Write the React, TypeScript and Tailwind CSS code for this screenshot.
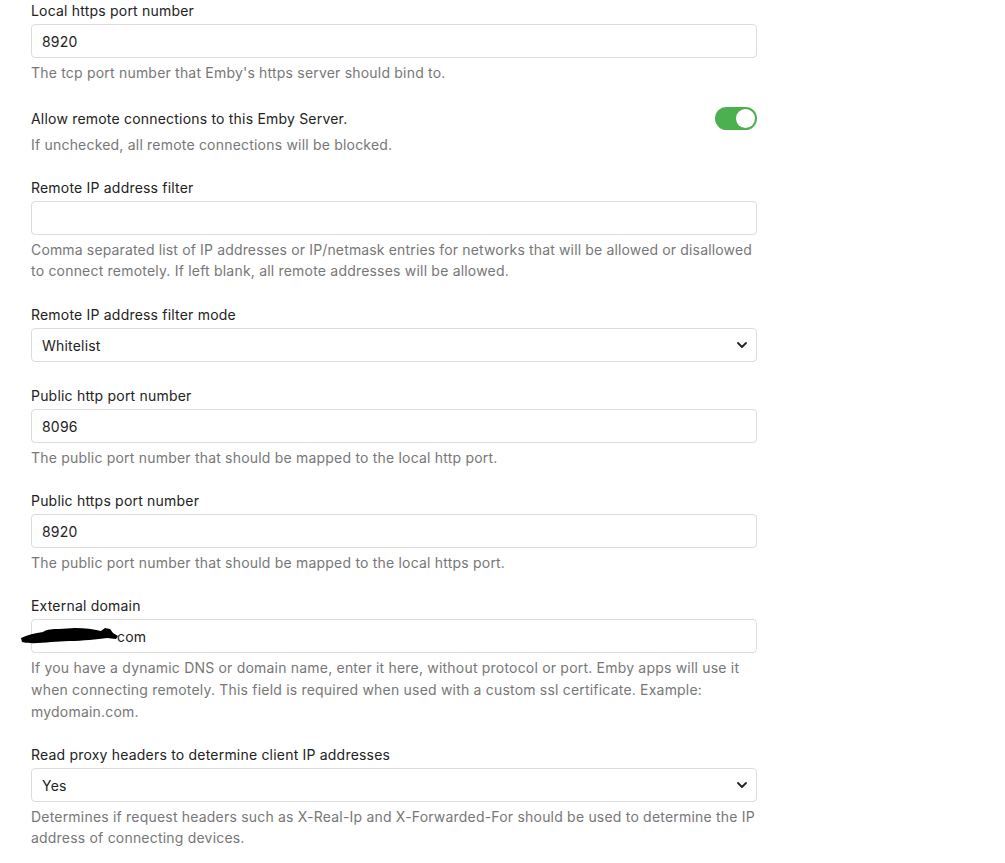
import { ChevronDown } from "lucide-react";

const font = { fontFamily: "Inter, 'Noto Sans', sans-serif" };

function Label({ children }: { children: React.ReactNode }) {
  return <div className="text-[14px] leading-5 tracking-[0.2px] text-[#222] mb-[3px]">{children}</div>;
}

function Help({ children, tall }: { children: React.ReactNode; tall?: boolean }) {
  return (
    <div
      className={
        "mt-[4px] text-[14px] tracking-[0.2px] text-[#777] whitespace-nowrap " +
        (tall ? "leading-[22px]" : "leading-[21px]")
      }
    >
      {children}
    </div>
  );
}

function TextBox({ value }: { value: string }) {
  return (
    <div className="h-[34px] w-full rounded-[4px] border border-[#dcdcdc] bg-white pl-[10px] flex items-center text-[14px] tracking-[0.2px] text-[#222]">
      {value}
    </div>
  );
}

function SelectBox({ value }: { value: string }) {
  return (
    <div className="h-[34px] w-full rounded-[4px] border border-[#dcdcdc] bg-white pl-[10px] pr-[6px] flex items-center justify-between text-[14px] tracking-[0.2px] text-[#222]">
      <span>{value}</span>
      <ChevronDown size={16} strokeWidth={2.75} className="text-[#222]" />
    </div>
  );
}

export default function App() {
  return (
    <div className="min-h-screen bg-white" style={font}>
      <div className="w-[726px] ml-[31px] pt-[1px]">
        {/* local https */}
        <div className="mb-[24px]">
          <Label>Local https port number</Label>
          <TextBox value="8920" />
          <Help>The tcp port number that Emby's https server should bind to.</Help>
        </div>

        {/* remote toggle */}
        <div className="mb-[23px]">
          <div className="flex items-center justify-between h-[23px]">
            <span className="text-[14px] tracking-[0.2px] text-[#222]">Allow remote connections to this Emby Server.</span>
            <div className="w-[42px] h-[23px] rounded-full bg-[#4caf50] flex items-center justify-end pr-[2px]">
              <div className="w-[19px] h-[19px] rounded-full bg-white" />
            </div>
          </div>
          <Help>If unchecked, all remote connections will be blocked.</Help>
        </div>

        <div className="mb-[24px]">
          <Label>Remote IP address filter</Label>
          <TextBox value="" />
          <Help>
            <span className="tracking-[0.15px]">
              Comma separated list of IP addresses or IP/netmask entries for networks that will be allowed or disallowed
            </span>
            <br />
            to connect remotely. If left blank, all remote addresses will be allowed.
          </Help>
        </div>

        <div className="mb-[24px]">
          <Label>Remote IP address filter mode</Label>
          <SelectBox value="Whitelist" />
        </div>

        <div className="mb-[23px]">
          <Label>Public http port number</Label>
          <TextBox value="8096" />
          <Help>The public port number that should be mapped to the local http port.</Help>
        </div>

        <div className="mb-[23px]">
          <Label>Public https port number</Label>
          <TextBox value="8920" />
          <Help>The public port number that should be mapped to the local https port.</Help>
        </div>

        <div className="mb-[22px]">
          <Label>External domain</Label>
          <div className="relative">
            <div className="h-[34px] w-full rounded-[4px] border border-[#dcdcdc] bg-white pl-[85px] flex items-center text-[14px] tracking-[0.2px] text-[#222]">
              com
            </div>
            {/* redaction scribble */}
            <svg className="absolute left-[-10px] top-[8px]" width="98" height="18" viewBox="0 0 98 18">
              <path
                d="M0 11 C6 8 14 6 22 5 C26 2 32 2 38 2 L54 1 C64 1 72 2 80 4 L84 1 L89 2 L92 6 L97 9 L95 12 L86 11 C76 12 62 14 48 14 L30 15 C20 16 8 17 1 15 Z"
                fill="#000"
              />
            </svg>
          </div>
          <Help tall>
            If you have a dynamic DNS or domain name, enter it here, without protocol or port. Emby apps will use it
            <br />
            when connecting remotely. This field is required when used with a custom ssl certificate. Example:
            <br />
            mydomain.com.
          </Help>
        </div>

        <div className="mb-[24px]">
          <Label>Read proxy headers to determine client IP addresses</Label>
          <SelectBox value="Yes" />
          <Help>
            Determines if request headers such as X-Real-Ip and X-Forwarded-For should be used to determine the IP
            <br />
            address of connecting devices.
          </Help>
        </div>
      </div>
    </div>
  );
}
